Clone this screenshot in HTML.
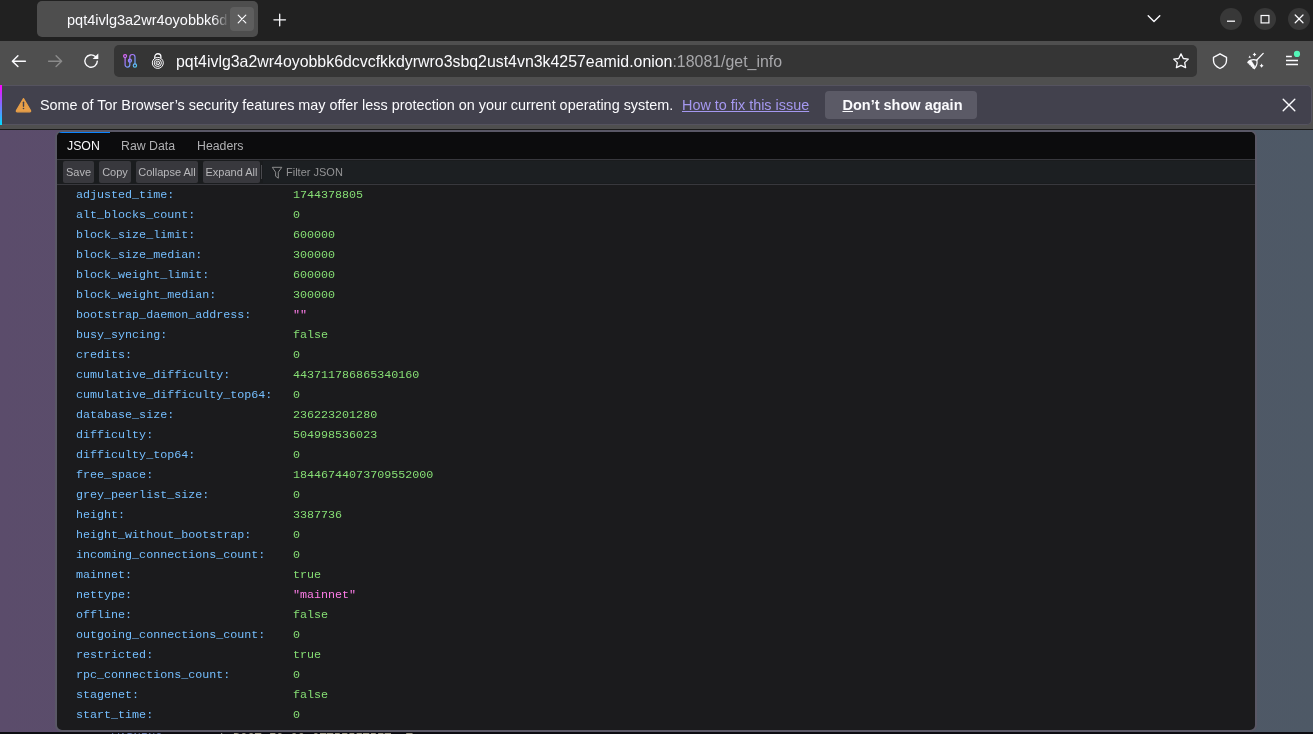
<!DOCTYPE html>
<html><head><meta charset="utf-8">
<style>
*{margin:0;padding:0;box-sizing:border-box}
html,body{width:1313px;height:734px;overflow:hidden;background:#212121;font-family:"Liberation Sans",sans-serif}
.abs{position:absolute}
body>div,body>svg{will-change:transform}
#titlebar{left:0;top:0;width:1313px;height:41px;background:#212121}
#tab{left:37px;top:1px;width:221px;height:36px;background:#4e4e4e;border-radius:5px}
#tabtitle{left:67px;top:10px;width:161px;height:20px;overflow:hidden;white-space:nowrap;color:#fbfbfe;font-size:14.5px;line-height:20px;
 -webkit-mask-image:linear-gradient(to right,#000 146px,transparent 162px)}
#tabclose{left:230px;top:7px;width:24px;height:24px;background:#5e5e5e;border-radius:4px}
#toolbar{left:0;top:41px;width:1313px;height:89px;background:#4f4f4f}
#urlbar{left:114px;top:45px;width:1083px;height:32px;background:#353535;border-radius:5px}
#urltext{left:176px;top:52px;height:20px;line-height:20px;font-size:15.9px;color:#fbfbfe;white-space:nowrap}
#urltext span{color:#a8a8ab}
#notif{left:0;top:85px;width:1312px;height:40px;background:#42414d;border:1px solid #55535f;border-left:none;border-radius:0 5px 5px 0}
#stripe{left:0;top:85px;width:2px;height:40px;background:linear-gradient(#ff00ff,#00ddff)}
#notiftext{left:40px;top:95px;line-height:20px;font-size:14.4px;color:#fbfbfe;white-space:nowrap}
#notiflink{left:682px;top:95px;line-height:20px;font-size:14.4px;color:#a598f0;text-decoration:underline;white-space:nowrap}
#notifbtn{left:825px;top:91px;width:152px;height:28px;padding-left:3px;background:#5b5a66;border-radius:4px;color:#fbfbfe;font-weight:bold;font-size:14.5px;line-height:28px;text-align:center}
#darkline{left:0;top:129px;width:1313px;height:1px;background:#1b1b1b}
#content{left:0;top:130px;width:1313px;height:602px;background:linear-gradient(to right,#5b4c6b,#4e5966)}
#bottomstrip{left:0;top:732px;width:1313px;height:2px;background:#0d0d12}
#panel{left:55px;top:130px;width:1202px;height:601.5px;border:2px solid #5a5866;border-radius:7px;overflow:hidden;background:#1b1b1d}
#tabs{left:0;top:0;width:100%;height:28px;background:#0c0c0d;border-bottom:1px solid #38383d}
.jtab{position:absolute;top:0;height:28px;line-height:29px;font-size:12.3px;color:#b1b1b3}
#jtb{left:0;top:28px;width:100%;height:25px;background:#1a1c1e;border-bottom:1px solid #38383d}
.btn{position:absolute;top:1px;height:22px;background:#38383d;border-radius:2px;color:#b8b8bb;font-size:11px;line-height:23px;text-align:center}
#rows{left:0;top:53px;width:100%}
.row{position:absolute;left:0;height:20px;width:100%;font-family:"Liberation Mono",monospace;font-size:11.7px;line-height:20px;white-space:nowrap}
.k{position:absolute;left:19px;color:#75bfff}
.v{position:absolute;left:236px;color:#86de74}
.s{color:#ff7de9}
</style></head><body>
<div id="titlebar" class="abs"></div>
<div id="tab" class="abs"></div>
<div id="tabtitle" class="abs">pqt4ivlg3a2wr4oyobbk6dcvcfkkdyrwro3sbq2ust4vn3k4257eamid.onion</div>
<div id="tabclose" class="abs"></div>
<div id="toolbar" class="abs"></div>
<div id="urlbar" class="abs"></div>
<div id="urltext" class="abs">pqt4ivlg3a2wr4oyobbk6dcvcfkkdyrwro3sbq2ust4vn3k4257eamid.onion<span>:18081/get_info</span></div>
<div id="notif" class="abs"></div>
<div id="stripe" class="abs"></div>
<div id="notiftext" class="abs">Some of Tor Browser’s security features may offer less protection on your current operating system.</div>
<div id="notiflink" class="abs">How to fix this issue</div>
<div id="notifbtn" class="abs"><u>D</u>on’t show again</div>
<div id="darkline" class="abs"></div>
<div id="content" class="abs"></div>
<div class="abs" style="left:0;top:732px;width:1313px;height:2px;overflow:hidden;background:#0d0d12">
 <div class="abs" style="left:112px;top:1px;font-family:'Liberation Mono',monospace;font-size:12px;line-height:12px;white-space:nowrap;color:#6070a0">WARNING&nbsp;&nbsp;</div>
 <div class="abs" style="left:218px;top:1px;font-family:'Liberation Mono',monospace;font-size:12px;line-height:12px;white-space:nowrap;color:#909088">'</div>
 <div class="abs" style="left:233px;top:1px;font-family:'Liberation Mono',monospace;font-size:12px;line-height:12px;white-space:nowrap;color:#9a9480">BOOT FO OO OTTIFIFTIFT &nbsp;T</div>
</div>
<div id="panel" class="abs">
 <div id="tabs" class="abs">
  <div class="abs" style="left:0;top:0;width:53px;height:1px;background:#0a84ff"></div>
  <div class="jtab" style="left:10px;color:#f9f9fa">JSON</div>
  <div class="jtab" style="left:64px">Raw Data</div>
  <div class="jtab" style="left:140px">Headers</div>
 </div>
 <div id="jtb" class="abs">
  <div class="btn" style="left:6px;width:31px">Save</div>
  <div class="btn" style="left:42px;width:32px">Copy</div>
  <div class="btn" style="left:79px;width:62px">Collapse All</div>
  <div class="btn" style="left:146px;width:57px">Expand All</div>
  <div class="abs" style="left:204px;top:5px;width:1px;height:14px;background:#4a4a4f"></div>
  <div class="abs" style="left:206px;top:1px;width:994px;height:22px;background:#1c1f22"></div>
  <div class="abs" style="left:229px;top:1px;height:22px;line-height:23px;font-size:11px;color:#939395">Filter JSON</div>
 </div>
 <div id="rows" class="abs">
  <div class="row" style="top:0px"><span class="k">adjusted_time:</span><span class="v">1744378805</span></div>
  <div class="row" style="top:20px"><span class="k">alt_blocks_count:</span><span class="v">0</span></div>
  <div class="row" style="top:40px"><span class="k">block_size_limit:</span><span class="v">600000</span></div>
  <div class="row" style="top:60px"><span class="k">block_size_median:</span><span class="v">300000</span></div>
  <div class="row" style="top:80px"><span class="k">block_weight_limit:</span><span class="v">600000</span></div>
  <div class="row" style="top:100px"><span class="k">block_weight_median:</span><span class="v">300000</span></div>
  <div class="row" style="top:120px"><span class="k">bootstrap_daemon_address:</span><span class="v s">""</span></div>
  <div class="row" style="top:140px"><span class="k">busy_syncing:</span><span class="v">false</span></div>
  <div class="row" style="top:160px"><span class="k">credits:</span><span class="v">0</span></div>
  <div class="row" style="top:180px"><span class="k">cumulative_difficulty:</span><span class="v">443711786865340160</span></div>
  <div class="row" style="top:200px"><span class="k">cumulative_difficulty_top64:</span><span class="v">0</span></div>
  <div class="row" style="top:220px"><span class="k">database_size:</span><span class="v">236223201280</span></div>
  <div class="row" style="top:240px"><span class="k">difficulty:</span><span class="v">504998536023</span></div>
  <div class="row" style="top:260px"><span class="k">difficulty_top64:</span><span class="v">0</span></div>
  <div class="row" style="top:280px"><span class="k">free_space:</span><span class="v">18446744073709552000</span></div>
  <div class="row" style="top:300px"><span class="k">grey_peerlist_size:</span><span class="v">0</span></div>
  <div class="row" style="top:320px"><span class="k">height:</span><span class="v">3387736</span></div>
  <div class="row" style="top:340px"><span class="k">height_without_bootstrap:</span><span class="v">0</span></div>
  <div class="row" style="top:360px"><span class="k">incoming_connections_count:</span><span class="v">0</span></div>
  <div class="row" style="top:380px"><span class="k">mainnet:</span><span class="v">true</span></div>
  <div class="row" style="top:400px"><span class="k">nettype:</span><span class="v s">"mainnet"</span></div>
  <div class="row" style="top:420px"><span class="k">offline:</span><span class="v">false</span></div>
  <div class="row" style="top:440px"><span class="k">outgoing_connections_count:</span><span class="v">0</span></div>
  <div class="row" style="top:460px"><span class="k">restricted:</span><span class="v">true</span></div>
  <div class="row" style="top:480px"><span class="k">rpc_connections_count:</span><span class="v">0</span></div>
  <div class="row" style="top:500px"><span class="k">stagenet:</span><span class="v">false</span></div>
  <div class="row" style="top:520px"><span class="k">start_time:</span><span class="v">0</span></div>
 </div>
</div>
<div class="abs" style="left:1220px;top:8px;width:22px;height:22px;border-radius:50%;background:#383838"></div>
<div class="abs" style="left:1254px;top:8px;width:22px;height:22px;border-radius:50%;background:#383838"></div>
<div class="abs" style="left:1288px;top:8px;width:22px;height:22px;border-radius:50%;background:#383838"></div>
<svg class="abs" style="left:0;top:0" width="1313" height="734" viewBox="0 0 1313 734">
<defs>
<linearGradient id="cg" x1="123" y1="54" x2="137" y2="68" gradientUnits="userSpaceOnUse">
<stop offset="0" stop-color="#f060f8"/><stop offset="0.5" stop-color="#8f86ff"/><stop offset="1" stop-color="#45d8f2"/>
</linearGradient>
</defs>
<g fill="none" stroke="#fbfbfe" stroke-linecap="round" stroke-linejoin="round">
 <!-- tab close -->
 <path d="M238.2 15.2 L245.8 22.8 M245.8 15.2 L238.2 22.8" stroke-width="1.2"/>
 <!-- new tab plus -->
 <path d="M279.7 14.2 V25.8 M273.9 19.8 H285.5" stroke-width="1.3"/>
 <!-- chevron -->
 <path d="M1148.2 15.8 L1154 21.6 L1159.8 15.8" stroke-width="1.4"/>
 <!-- back -->
 <path d="M25.4 61.2 H12.6 M17.9 55.7 L12.4 61.2 L17.9 66.6" stroke-width="1.45"/>
 <!-- forward -->
 <path d="M48.6 61.2 H61.4 M56.1 55.7 L61.6 61.2 L56.1 66.6" stroke-width="1.45" stroke="#8a8a8a"/>
 <!-- reload -->
 <path d="M97.3 61.1 A6.2 6.2 0 1 1 95.4 56.6" stroke-width="1.4"/>
 <!-- star -->
 <path d="M1181 53.9 L1183.3 58.5 L1188.3 59.1 L1184.7 62.6 L1185.6 67.6 L1181 65.3 L1176.4 67.6 L1177.3 62.6 L1173.7 59.1 L1178.7 58.5 Z" stroke-width="1.3"/>
 <!-- shield -->
 <path d="M1220 53.8 L1213.5 57.3 V60.6 C1213.5 64.2 1216 66.8 1220 68.5 C1224 66.8 1226.5 64.2 1226.5 60.6 V57.3 Z" stroke-width="1.35"/>
 <!-- broom handle -->
 <path d="M1263.2 53.4 L1256.6 60.2" stroke-width="1.3"/>
 <path d="M1248.3 61.5 Q1252.5 58.3 1256.9 60.4 Q1257.7 64.8 1254.4 68.6" stroke-width="1.2"/>
 <path d="M1248 61.8 L1250.9 60.2 L1252.4 62.6 L1254.7 66.2 L1254.4 68.8 L1252.4 67.9 L1252.6 66.6 L1251 66.4 L1250.8 65 L1249.4 64.8 L1249.2 63.5 L1247.9 63.1 Z" fill="#fbfbfe" stroke-width="0.6"/>
 <!-- hamburger -->
 <path d="M1286 56.5 H1291.8 M1286 60.6 H1298 M1286 64.6 H1298" stroke-width="1.5" stroke-linecap="butt"/>
 <!-- titlebar minimize/max/close -->
 <path d="M1227 21.2 H1235" stroke-width="1.3" stroke-linecap="butt"/>
 <rect x="1261.1" y="15.5" width="7.8" height="7.4" stroke-width="1.2" stroke-linejoin="miter"/>
 <path d="M1295.2 15 L1303 22.8 M1303 15 L1295.2 22.8" stroke-width="1.25"/>
 <!-- notif close -->
 <path d="M1283.2 99.2 L1294.8 110.8 M1294.8 99.2 L1283.2 110.8" stroke-width="1.4"/>
</g>
<!-- titlebar circles (drawn beneath icons by order? draw before) -->
<!-- reload arrowhead -->
<path d="M98.3 53.4 V59.1 H92.6 Z" fill="#fbfbfe"/>
<!-- broom sparkles -->
<g fill="#fbfbfe">
 <path d="M1254.5 52.6 L1255.2 53.8 L1256.4 54.5 L1255.2 55.2 L1254.5 56.4 L1253.8 55.2 L1252.6 54.5 L1253.8 53.8 Z"/>
 <path d="M1249.7 55.6 L1250.9 57.8 L1248.5 57.8 Z"/>
 <path d="M1261.6 63.6 L1262.4 64.9 L1263.6 65.7 L1262.4 66.5 L1261.6 67.8 L1260.8 66.5 L1259.6 65.7 L1260.8 64.9 Z"/>
</g>
<circle cx="1297" cy="53.9" r="3.6" fill="#4f4f4f"/>
<circle cx="1297" cy="53.9" r="3.1" fill="#54f5b8"/>
<!-- circuit icon -->
<g fill="none" stroke="url(#cg)" stroke-width="1.2" stroke-linecap="round">
 <path d="M125.1 57.7 V64.7 A2.35 2.35 0 0 0 129.8 64.7 V57.1 A2.6 2.6 0 0 1 135 57.1 V63.9"/>
 <circle cx="125.1" cy="56.1" r="1.5"/>
 <circle cx="129.9" cy="60.7" r="1.55"/>
 <circle cx="134.9" cy="65.6" r="1.65"/>
</g>
<!-- onion lock -->
<g fill="none" stroke="#fbfbfe" stroke-width="1">
 <path d="M154.8 58.2 V56.8 A3.05 3.05 0 0 1 160.9 56.8 V58.2" stroke-width="1.3"/>
 <circle cx="157.8" cy="62.9" r="5.5"/>
 <circle cx="157.8" cy="62.9" r="3.6"/>
 <circle cx="157.8" cy="62.9" r="1.8"/>
</g>
<circle cx="157.8" cy="62.9" r="0.6" fill="#fbfbfe"/>
<!-- warning triangle -->
<path d="M23.5 98.6 L30.6 110.6 Q31 111.8 29.8 111.8 H17.2 Q16 111.8 16.4 110.6 Z" fill="#e89f48" stroke="#e89f48" stroke-width="1.2" stroke-linejoin="round"/>
<path d="M23.5 102.2 V106.2" stroke="#42414d" stroke-width="1.4" stroke-linecap="round"/>
<circle cx="23.5" cy="108.5" r="0.8" fill="#42414d"/>
<!-- funnel -->
<path d="M272.3 167.3 H281.8 L278.3 172.2 V178.2 L275.6 176.2 V172.2 Z" fill="none" stroke="#939395" stroke-width="0.95" stroke-linejoin="round"/>
</svg>
</body></html>
